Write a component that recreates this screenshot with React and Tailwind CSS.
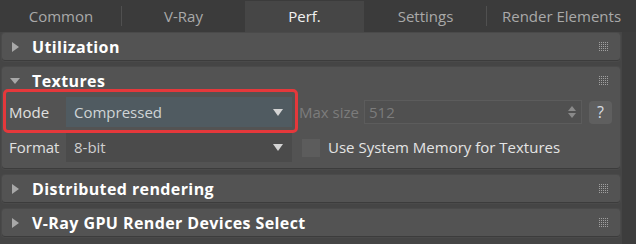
import React from 'react';

const tabs = [
  { label: 'Common', w: 'w-[122px]' },
  { label: 'V-Ray', w: 'w-[123px]' },
  { label: 'Perf.', w: 'w-[119px]', active: true },
  { label: 'Settings', w: 'w-[123px]' },
  { label: 'Render Elements', w: 'w-[149px]' },
];

const Grip = () => (
  <svg width="10" height="10" viewBox="0 0 10 10" className="shrink-0">
    {[0, 2, 4, 6, 8].map((y) =>
      [0, 2, 4, 6, 8].map((x) => (
        <rect key={`${x}-${y}`} x={x} y={y} width="1" height="1" fill="#a0a0a0" />
      ))
    )}
  </svg>
);

const Arrow = ({ open }) => (
  <svg width="10" height="10" viewBox="0 0 10 10" className="shrink-0">
    {open ? (
      <polygon points="0,2 10,2 5,8" fill="#a8a8a8" />
    ) : (
      <polygon points="2,0 9,5 2,10" fill="#a8a8a8" />
    )}
  </svg>
);

const DropArrow = () => (
  <svg width="10" height="7" viewBox="0 0 10 7" className="shrink-0">
    <polygon points="0,0 10,0 5,7" fill="#d4d4d4" />
  </svg>
);

const RolloutHeader = ({ title, open }) => (
  <div className="flex items-center h-[28px] pl-[8px] pr-[11px]">
    <Arrow open={open} />
    <span className="ml-[12px] flex-1 text-[16px] font-bold text-white leading-none tracking-[0.4px]">
      {title}
    </span>
    <Grip />
  </div>
);

const Rollout = ({ title }) => (
  <div className="rounded-[3px] bg-[#535353] shadow-[inset_0_-1px_0_#3c3c3c,0_0_0_1px_#4a4a4a]">
    <RolloutHeader title={title} />
  </div>
);

export default function App() {
  return (
    <div
      className="w-[636px] h-[244px] bg-[#454545] flex flex-col overflow-hidden select-none"
      style={{ fontFamily: '"Open Sans", "Noto Sans", sans-serif' }}
    >
      {/* Tabs */}
      <div className="flex h-[32px] bg-[#3b3b3b] shrink-0">
        {tabs.map((t, i) => (
          <div
            key={t.label}
            className={`${t.w} relative flex items-center justify-center text-[15px] ${
              t.active ? 'bg-[#464646] text-[#f2f2f2] mt-[1px]' : 'text-[#a9a9a9]'
            }`}
          >
            {t.label}
            {(i === 0 || i === 3) && (
              <div className="absolute right-0 top-[6px] h-[20px] w-px bg-[#505050]" />
            )}
          </div>
        ))}
      </div>

      {/* Body */}
      <div className="flex flex-1">
        <div className="w-[622px] pl-[2px] pr-[2px] pt-[1px] flex flex-col gap-[6px]">
          <Rollout title="Utilization" />

          {/* Textures */}
          <div className="relative h-[102px] rounded-[3px] bg-[#535353] shadow-[inset_0_-1px_0_#3c3c3c,0_0_0_1px_#4a4a4a]">
            <RolloutHeader title="Textures" open />
            <div className="flex flex-col gap-[6px] pt-[2px] text-[15px]">
              <div className="flex items-center h-[30px]">
                <span className="w-[64px] pl-[7px] text-[#e0e0e0]">Mode</span>
                <div className="w-[226px] h-[30px] bg-[#505b61] flex items-center justify-between pl-[8px] pr-[9px] text-[#cfd4d6]">
                  <span>Compressed</span>
                  <DropArrow />
                </div>
                <span className="ml-[7px] w-[65px] text-[#7c7c7c]">Max size</span>
                <div className="w-[218px] h-[24px] bg-[#505050] border border-[#5c5c5c] flex items-center justify-between pl-[4px] pr-[5px] text-[#7c7c7c]">
                  <span>512</span>
                  <svg width="8" height="14" viewBox="0 0 8 14">
                    <polygon points="0,6 8,6 4,1" fill="#8a8a8a" />
                    <polygon points="0,8 8,8 4,13" fill="#8a8a8a" />
                  </svg>
                </div>
                <div className="ml-[7px] w-[23px] h-[23px] rounded-[4px] bg-[#5f5f5f] flex items-center justify-center text-[16px] text-[#d8dde2]">
                  ?
                </div>
              </div>
              <div className="flex items-center h-[29px]">
                <span className="w-[64px] pl-[7px] text-[#e0e0e0]">Format</span>
                <div className="w-[226px] h-[29px] bg-[#4b4b4b] flex items-center justify-between pl-[8px] pr-[9px] text-[#cfcfcf]">
                  <span>8-bit</span>
                  <DropArrow />
                </div>
                <div className="ml-[10px] w-[18px] h-[18px] bg-[#5c5c5c]" />
                <span className="ml-[8px] text-[#e4e4e4]">Use System Memory for Textures</span>
              </div>
            </div>
            {/* highlight annotation */}
            <div className="absolute left-[1px] top-[22px] w-[295px] h-[44px] border-[3px] border-[#e5383b] rounded-[5px] pointer-events-none" />
          </div>

          <Rollout title="Distributed rendering" />
          <Rollout title="V-Ray GPU Render Devices Select" />
        </div>
        <div className="w-[14px] bg-[#3d3d3d]" />
      </div>
    </div>
  );
}
